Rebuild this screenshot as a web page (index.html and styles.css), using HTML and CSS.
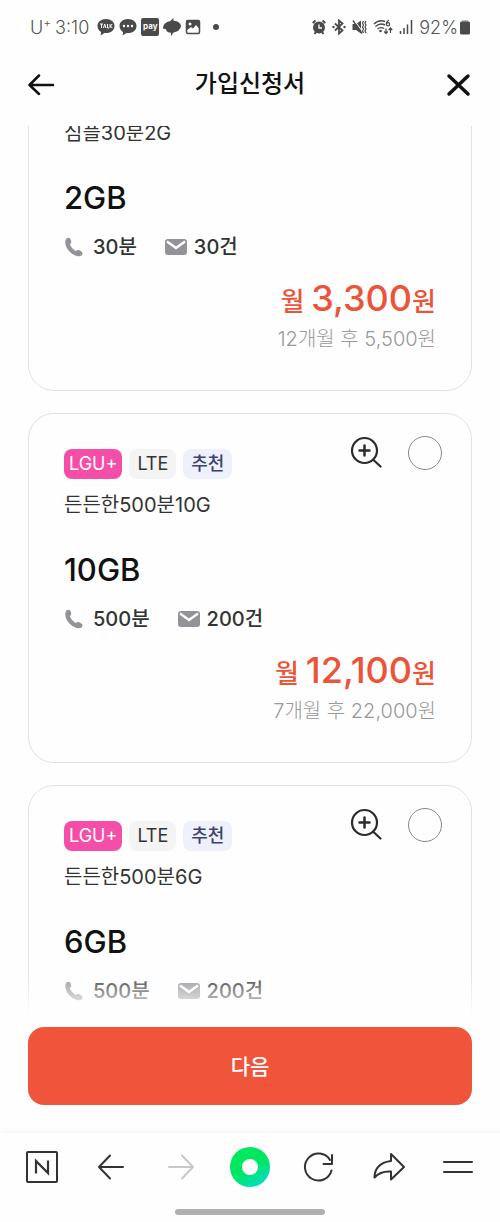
FILE: index.html
```
<!DOCTYPE html>
<html lang="ko">
<head>
    <meta charset="UTF-8">
    <meta name="viewport" content="width=device-width, initial-scale=1.0">
    <title>가입신청서</title>
    <link rel="stylesheet" href="styles.css">
</head>
<body>

<!-- Phone status bar -->
<div class="status-bar">
    <div class="status-left">
        <span>U<sup>+</sup></span>
        <span class="clock">3:10</span>
        <svg width="18" height="18" viewBox="0 0 18 18">
            <path d="M9 1C4 1 .5 4 .5 8c0 2.600 1.500 4.700 3.600 6L3.600 17.500 7.500 15c6 .6 10-2.600 10-7C17.500 4 14 1 9 1z" fill="#4a4a4a"/>
            <path d="M3 6h3M4.500 6v4M6.500 10l1.200-4 1.200 4M10.500 6v4h1.500M13 6v4M15.200 6 13.500 8l1.700 2" fill="none" stroke="#fff"/>
        </svg>
        <svg width="18" height="18" viewBox="0 0 18 18">
            <path d="M9 1C4 1 .5 4 .5 8c0 2.600 1.500 4.700 3.600 6L3.600 17.500 7.500 15c6 .6 10-2.600 10-7C17.500 4 14 1 9 1z" fill="#4a4a4a"/>
            <circle cx="5" cy="8" r="1.200" fill="#fff"/><circle cx="9" cy="8" r="1.200" fill="#fff"/><circle cx="13" cy="8" r="1.200" fill="#fff"/>
        </svg>
        <span class="pay">pay</span>
        <svg width="18" height="18" viewBox="0 0 18 18">
            <path d="M10.500 0v2.800C15 3 18 5.500 18 8.500c-1 3.500-4 5.500-7.500 6L8 18v-3.200C5 14.600 3 13 3 11.200L0 10.500C0 6.500 3 3.500 7 3.200z" fill="#4a4a4a"/>
        </svg>
        <svg width="16" height="16" viewBox="0 0 16 16">
            <rect x="1.500" y="1.500" width="13" height="13" rx="1.500" fill="none" stroke="#4a4a4a" stroke-width="1.500"/>
            <path d="M1.500 1.500h13V10l-3.500-4-3 3.500-2-1.500-4.500 3.500z" fill="#4a4a4a"/>
            <circle cx="5" cy="5" r="1.500" fill="#fff"/>
        </svg>
        <span class="more-dot"></span>
    </div>
    <div class="status-right">
        <svg width="14" height="16" viewBox="0 0 14 16">
            <circle cx="7" cy="8.500" r="6" fill="#4a4a4a"/>
            <path d="M.7 4 3.500 1.500M13.300 4l-2.800-2.500M2.500 15l1.500-2M11.500 15 10 13" stroke="#4a4a4a" stroke-width="2"/>
            <path d="M7 5.500V9h3" fill="none" stroke="#fff" stroke-width="1.300"/>
        </svg>
        <svg width="14" height="16" viewBox="0 0 14 16">
            <path d="M3 4.500 10.500 11.500 7 14.500v-13L10.500 4.500 3 11.500" fill="none" stroke="#4a4a4a" stroke-width="1.800"/>
            <circle cx="1.500" cy="8" r="1.200" fill="#4a4a4a"/><circle cx="12.500" cy="8" r="1.200" fill="#4a4a4a"/>
        </svg>
        <svg width="15" height="16" viewBox="0 0 15 16">
            <path d="M.5 5h3.500l5-3.500v13L4 11H.5z" fill="#4a4a4a"/>
            <path d="M1 1.500 10 14.500" stroke="#4a4a4a" stroke-width="1.500"/>
            <path d="M2.500 1.500 10.500 12.500" stroke="#fff" stroke-width="1"/>
            <path d="M11.500 2l-1 2 1 2-1 2 1 2-1 2 1 2M14 2l-1 2 1 2-1 2 1 2-1 2 1 2" fill="none" stroke="#4a4a4a" stroke-width="1.200"/>
        </svg>
        <svg width="20" height="16" viewBox="0 0 20 16">
            <path d="M1 5Q6 0 12 2.500M2.500 7.500Q7 3.500 12 6M4.500 10Q7.500 7.500 11 9.500" fill="none" stroke="#4a4a4a" stroke-width="1.400"/>
            <circle cx="7.500" cy="12" r="1.300" fill="#4a4a4a"/>
            <path d="M15.800 1Q13.300 2.800 13.300 5.200" fill="none" stroke="#4a4a4a" stroke-width="1.200"/>
            <circle cx="15" cy="5.200" r="1.600" fill="none" stroke="#4a4a4a" stroke-width="1.200"/>
            <path d="M13 9.500V14M11.200 12.500 13 14.500l1.800-2M17.500 14V9.500M15.700 11l1.800-2 1.800 2" fill="none" stroke="#4a4a4a" stroke-width="1.200"/>
        </svg>
        <svg width="14" height="16" viewBox="0 0 14 16">
            <path d="M1.500 12v3M5 9v6M8.500 5.500V15M12.500 1v14" stroke="#4a4a4a" stroke-width="1.500"/>
        </svg>
        <span class="battery-text">92%</span>
        <svg width="10" height="16" viewBox="0 0 10 16">
            <rect x="2" y="1" width="6" height="3" fill="#bbb"/>
            <rect y="2.500" width="10" height="13" rx="1.500" fill="#4a4a4a"/>
        </svg>
    </div>
</div>

<header class="page-header">
    <button type="button" class="icon-btn" aria-label="뒤로">
        <svg width="28" height="28" viewBox="0 0 28 28" fill="none" stroke="#111" stroke-width="2.500" stroke-linecap="round" stroke-linejoin="round">
            <path d="M25 15H2M11 5.500 1.500 15l9.500 9"/>
        </svg>
    </button>
    <h1>가입신청서</h1>
    <button type="button" class="icon-btn" aria-label="닫기">
        <svg width="28" height="28" viewBox="0 0 28 28" fill="none" stroke="#111" stroke-width="3.500" stroke-linecap="round">
            <path d="M5 6l19 18M24 6 5 24"/>
        </svg>
    </button>
</header>

<main class="plan-list" id="planList">
    <article class="plan">
        <div class="plan-top">
            <div class="tags">
                <span class="tag tag-carrier">LGU+</span>
                <span class="tag tag-net">LTE</span>
            </div>
            <div class="plan-actions">
                <button type="button" class="icon-btn" aria-label="상세보기">
                    <svg width="32" height="32"><use href="#zoomIcon"/></svg>
                </button>
                <input type="radio" name="plan" aria-label="심플30분2G">
            </div>
        </div>
        <p class="plan-name">심플30분2G</p>
        <h2 class="plan-data">2GB</h2>
        <ul class="plan-usage">
            <li><svg width="20" height="20"><use href="#phoneIcon"/></svg>30분</li>
            <li><svg width="24" height="20"><use href="#mailIcon"/></svg>30건</li>
        </ul>
        <p class="price">월 <strong>3,300</strong>원</p>
        <p class="price-after">12개월 후 5,500원</p>
    </article>

    <article class="plan">
        <div class="plan-top">
            <div class="tags">
                <span class="tag tag-carrier">LGU+</span>
                <span class="tag tag-net">LTE</span>
                <span class="tag tag-pick">추천</span>
            </div>
            <div class="plan-actions">
                <button type="button" class="icon-btn" aria-label="상세보기">
                    <svg width="32" height="32"><use href="#zoomIcon"/></svg>
                </button>
                <input type="radio" name="plan" aria-label="든든한500분10G">
            </div>
        </div>
        <p class="plan-name">든든한500분10G</p>
        <h2 class="plan-data">10GB</h2>
        <ul class="plan-usage">
            <li><svg width="20" height="20"><use href="#phoneIcon"/></svg>500분</li>
            <li><svg width="24" height="20"><use href="#mailIcon"/></svg>200건</li>
        </ul>
        <p class="price">월 <strong>12,100</strong>원</p>
        <p class="price-after">7개월 후 22,000원</p>
    </article>

    <article class="plan">
        <div class="plan-top">
            <div class="tags">
                <span class="tag tag-carrier">LGU+</span>
                <span class="tag tag-net">LTE</span>
                <span class="tag tag-pick">추천</span>
            </div>
            <div class="plan-actions">
                <button type="button" class="icon-btn" aria-label="상세보기">
                    <svg width="32" height="32"><use href="#zoomIcon"/></svg>
                </button>
                <input type="radio" name="plan" aria-label="든든한500분6G">
            </div>
        </div>
        <p class="plan-name">든든한500분6G</p>
        <h2 class="plan-data">6GB</h2>
        <ul class="plan-usage">
            <li><svg width="20" height="20"><use href="#phoneIcon"/></svg>500분</li>
            <li><svg width="24" height="20"><use href="#mailIcon"/></svg>200건</li>
        </ul>
    </article>
</main>

<div class="action-bar">
    <button type="button" class="next-btn">다음</button>
</div>

<!-- Browser toolbar -->
<nav class="toolbar">
    <button type="button" class="icon-btn" aria-label="네이버 홈">
        <svg width="32" height="32" viewBox="0 0 32 32" fill="none" stroke="#333" stroke-width="2">
            <rect x="1" y="1" width="30" height="30" rx="1"/>
            <path d="M10 22.500V10l12 12V9.500" stroke-width="2.200"/>
        </svg>
    </button>
    <button type="button" class="icon-btn" aria-label="이전">
        <svg width="32" height="32" viewBox="0 0 32 32" fill="none" stroke="#333" stroke-width="2" stroke-linecap="round" stroke-linejoin="round">
            <path d="M28 16H4M15 4.500 4 16l11 11.500"/>
        </svg>
    </button>
    <button type="button" class="icon-btn" aria-label="다음 페이지" disabled>
        <svg width="32" height="32" viewBox="0 0 32 32" fill="none" stroke="#c8c8c8" stroke-width="2" stroke-linecap="round" stroke-linejoin="round">
            <path d="M4 16h24M17 4.500 28 16 17 27.500"/>
        </svg>
    </button>
    <button type="button" class="icon-btn" aria-label="그린닷">
        <span class="green-dot"></span>
    </button>
    <button type="button" class="icon-btn" aria-label="새로고침">
        <svg width="32" height="32" viewBox="0 0 32 32" fill="none" stroke="#333" stroke-width="2" stroke-linecap="round" stroke-linejoin="round">
            <path d="M28.500 19.500A13.500 13.500 0 1 1 27 9M29 4v9h-8.500"/>
        </svg>
    </button>
    <button type="button" class="icon-btn" aria-label="공유">
        <svg width="32" height="32" viewBox="0 0 32 32" fill="none" stroke="#333" stroke-width="2" stroke-linecap="round" stroke-linejoin="round">
            <path d="M18 3l13 13-13 12.500V20.500C10 20 5.500 22 1.500 26.500 1.500 17 8 11 18 10z"/>
        </svg>
    </button>
    <button type="button" class="icon-btn" aria-label="메뉴">
        <svg width="32" height="32" viewBox="0 0 32 32" fill="none" stroke="#333" stroke-width="2" stroke-linecap="round">
            <path d="M2 11h28M2 21h28"/>
        </svg>
    </button>
</nav>
<div class="home-indicator"></div>

<!-- Shared card icons -->
<svg class="icon-defs" width="0" height="0">
    <symbol id="zoomIcon" viewBox="0 0 32 32">
        <g fill="none" stroke="#2b2b2b" stroke-width="2.200" stroke-linecap="round">
            <circle cx="14.500" cy="14.500" r="12.500"/>
            <path d="M23.500 24l7 6.500"/>
            <path d="M9.500 14.500h10M14.500 9.500v10" stroke-width="2.500"/>
        </g>
    </symbol>
    <symbol id="phoneIcon" viewBox="0 0 20 20">
        <path d="M2.500 1.500Q4.500-.2 6.200 1.500L7.300 4.500Q7.500 6 5.800 7.500 7.500 11.500 11.500 14 13.500 12.500 15 13l3 2q1.200 1.500-.5 3.500-2 1.500-5.500.3Q3.500 15.500 1.500 7.500.7 3.500 2.500 1.500z" fill="#929298"/>
    </symbol>
    <symbol id="mailIcon" viewBox="0 0 24 20">
        <rect x="1" y="2" width="22" height="16" rx="3" fill="#929298"/>
        <path d="M3 4.500 12 11l9-6.500" fill="none" stroke="#fff" stroke-width="2.400"/>
    </symbol>
</svg>

<script>
    // Start with the first card partly scrolled under the header
    document.getElementById('planList').scrollTop = 85;
</script>
</body>
</html>
```
FILE: styles.css
```
* {
    box-sizing: border-box;
}

body {
    display: flex;
    flex-direction: column;
    height: 100vh;
    margin: 0;
    background-color: #fefefe;
    color: #333;
    font-family: Inter, "Noto Sans CJK KR", sans-serif;
    font-size: 20px;
}

h1, h2, p, ul {
    margin: 0;
    padding: 0;
}

svg {
    display: block;
    flex-shrink: 0;
}

.icon-defs {
    position: absolute;
}

.icon-btn {
    display: flex;
    align-items: center;
    justify-content: center;
    padding: 0;
    border: none;
    background: none;
    cursor: pointer;
}

/* Status bar */
.status-bar {
    display: flex;
    justify-content: space-between;
    align-items: center;
    height: 54px;
    padding: 0 30px;
    flex-shrink: 0;
    color: #555;
    font-size: 18px;
    font-weight: 300;
}

.status-left, .status-right {
    display: flex;
    align-items: center;
    gap: 4px;
}

.status-right {
    gap: 6px;
}

.status-bar sup {
    font-size: 12px;
    line-height: 0;
}

.clock {
    margin-right: 4px;
}

.pay {
    width: 18px;
    height: 18px;
    border-radius: 2px;
    background-color: #4a4a4a;
    color: #fff;
    font-size: 8px;
    font-weight: 700;
    line-height: 16px;
    text-align: center;
}

.more-dot {
    width: 6px;
    height: 6px;
    margin-left: 8px;
    border-radius: 50%;
    background-color: #4a4a4a;
}

.battery-text {
    margin-right: -4px;
}

/* Header */
.page-header {
    display: flex;
    justify-content: space-between;
    align-items: center;
    height: 72px;
    padding: 0 28px 12px;
    flex-shrink: 0;
}

h1 {
    color: #111;
    font-size: 24px;
    font-weight: 500;
    line-height: 40px;
}

/* Plan cards */
.plan-list {
    display: flex;
    flex-direction: column;
    gap: 22px;
    flex: 1;
    min-height: 0;
    padding: 0 28px;
    overflow-y: auto;
    scrollbar-width: none;
}

.plan {
    flex-shrink: 0;
    min-height: 350px;
    padding: 20px 35px 0;
    border: 1px solid #e2e2e2;
    border-radius: 26px;
}

.plan-top {
    display: flex;
    justify-content: space-between;
    height: 56px;
}

.tags {
    display: flex;
    align-items: center;
    gap: 7px;
    padding-top: 4px;
}

.tag {
    height: 30px;
    padding: 0 8px;
    border-radius: 8px;
    font-size: 18px;
    line-height: 30px;
}

.tag-carrier {
    padding: 0 5px;
    background-color: #f54ea8;
    color: #fff;
}

.tag-net {
    background-color: #f4f4f5;
}

.tag-pick {
    background-color: #eef1fb;
    color: #3c416f;
    font-weight: 500;
}

.plan-actions {
    display: flex;
    align-items: flex-start;
    gap: 26px;
    margin-right: -6px;
    padding-top: 2px;
}

.plan-actions input {
    appearance: none;
    width: 34px;
    height: 34px;
    margin: 0;
    border: 1px solid #888;
    border-radius: 50%;
}

.plan-actions input:checked {
    border: 10px solid #f0543a;
}

.plan-name {
    line-height: 30px;
}

.plan-data {
    margin-top: 30px;
    color: #111;
    font-size: 31px;
    font-weight: 450;
    line-height: 40px;
}

.plan-usage {
    display: flex;
    gap: 27px;
    margin-top: 14px;
    list-style: none;
    font-weight: 450;
    line-height: 30px;
}

.plan-usage li {
    display: flex;
    align-items: center;
    gap: 9px;
}

.plan-usage li + li {
    gap: 6px;
}

.price {
    margin-top: 14px;
    color: #ec5439;
    font-size: 26px;
    font-weight: 500;
    line-height: 44px;
    text-align: right;
}

.price strong {
    font-size: 36px;
    font-weight: 450;
}

.price-after {
    color: #999;
    font-weight: 300;
    line-height: 30px;
    text-align: right;
}

/* Next button, with the list fading out above it */
.action-bar {
    position: relative;
    padding: 0 28px 28px;
    flex-shrink: 0;
}

.action-bar::before {
    content: "";
    position: absolute;
    right: 0;
    bottom: 100%;
    left: 0;
    height: 56px;
    background: linear-gradient(rgba(254, 254, 254, 0), #fefefe 80%);
    pointer-events: none;
}

.next-btn {
    width: 100%;
    height: 78px;
    padding-bottom: 4px;
    border: none;
    border-radius: 16px;
    background-color: #f0543a;
    color: #fff;
    font-family: inherit;
    font-size: 21px;
    font-weight: 500;
    cursor: pointer;
}

/* Browser toolbar */
.toolbar {
    display: flex;
    justify-content: space-between;
    align-items: center;
    height: 76px;
    padding: 0 22px 8px;
    flex-shrink: 0;
    box-shadow: 0 -2px 4px rgba(0, 0, 0, 0.04);
}

.toolbar .icon-btn {
    width: 40px;
}

.green-dot {
    width: 40px;
    height: 40px;
    flex-shrink: 0;
    border: 12px solid transparent;
    border-radius: 50%;
    background: linear-gradient(#fff, #fff) padding-box, linear-gradient(150deg, #00e85f 50%, #00d8e0) border-box;
}

.home-indicator {
    width: 150px;
    height: 6px;
    margin: 0 auto 7px;
    flex-shrink: 0;
    border-radius: 3px;
    background-color: #b0b0b0;
}
```
